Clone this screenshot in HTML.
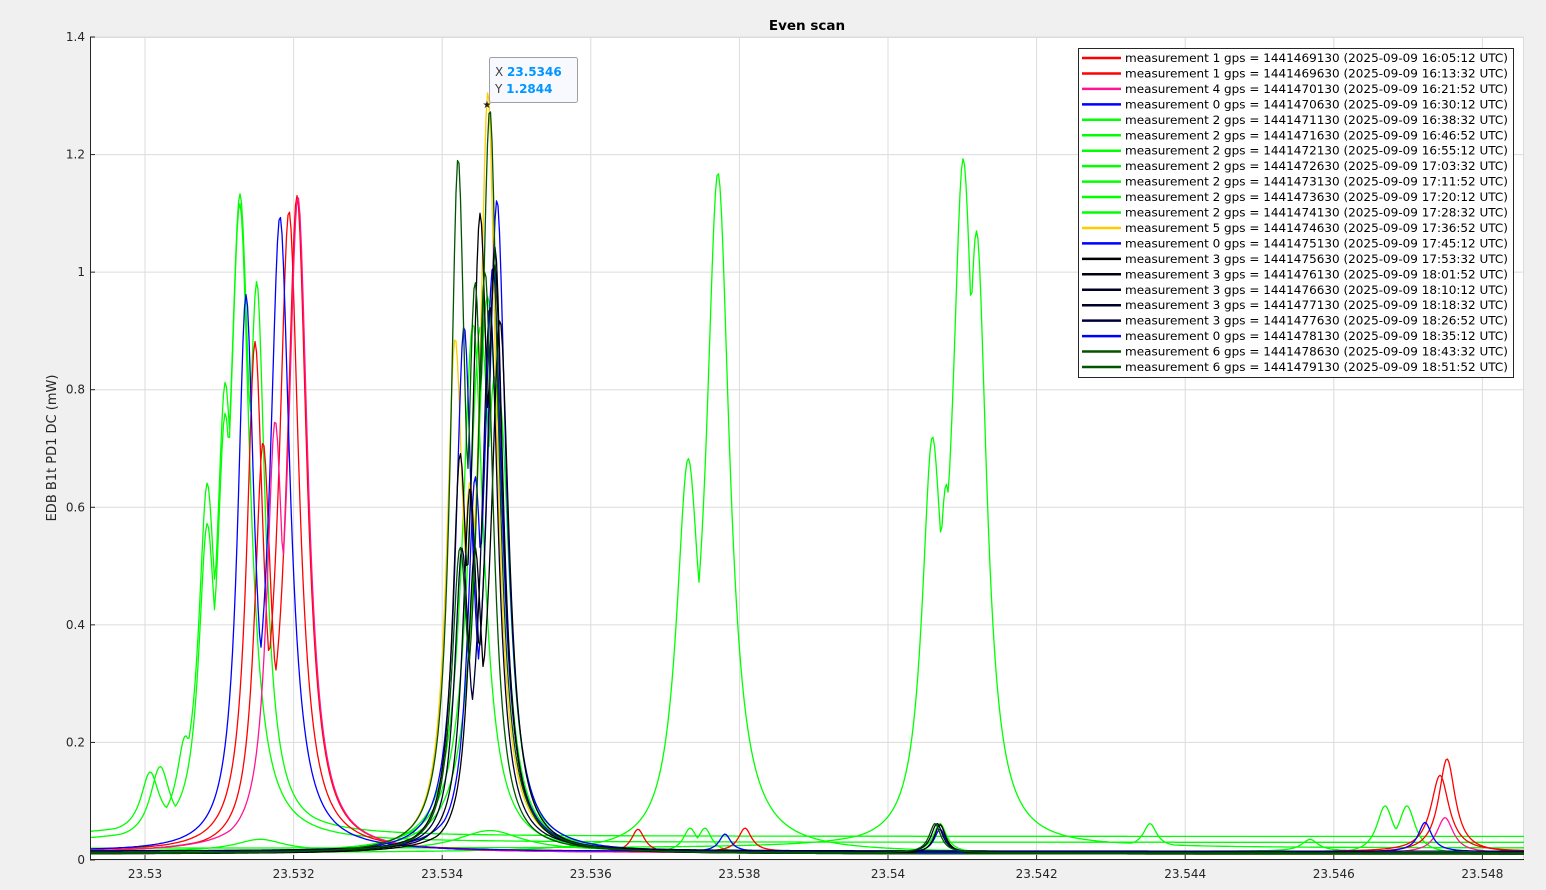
<!DOCTYPE html>
<html><head><meta charset="utf-8"><style>
html,body{margin:0;padding:0;background:#f0f0f0;width:1546px;height:890px;overflow:hidden;font-family:"Liberation Sans","DejaVu Sans",sans-serif}
svg{position:absolute;left:0;top:0}
</style></head><body>
<svg id="s" width="1546" height="890" xmlns="http://www.w3.org/2000/svg" font-family="DejaVu Sans, Liberation Sans, sans-serif">
<rect x="90" y="37" width="1434" height="823" fill="#fff"/>
<g id="grid" stroke="#dcdcdc" stroke-width="1"></g>
<g id="curves" fill="none" stroke-width="1.3" stroke-linejoin="round"></g>
<line x1="90.5" y1="37" x2="90.5" y2="860" stroke="#262626"/>
<line x1="90" y1="859.5" x2="1524" y2="859.5" stroke="#262626"/>
<g id="ticks" font-size="12" fill="#262626"></g>
<text x="807" y="30" font-size="13.5" font-weight="bold" text-anchor="middle" fill="#000">Even scan</text>
<text transform="translate(56,448) rotate(-90)" font-size="13" text-anchor="middle" fill="#262626">EDB B1t PD1 DC (mW)</text>
<g id="legend"></g>
<rect x="489.5" y="57.5" width="88" height="45" rx="2" fill="#f8f8ff" stroke="#a0a0a0"/>
<text x="495" y="76" font-size="12" fill="#404040">X <tspan fill="#0096ff" font-weight="bold">23.5346</tspan></text>
<text x="495" y="93" font-size="12" fill="#404040">Y <tspan fill="#0096ff" font-weight="bold">1.2844</tspan></text>
<text x="487" y="108" font-size="10" text-anchor="middle" fill="#222">★</text>
</svg>
<script>
const NS="http://www.w3.org/2000/svg";
const X0=90,X1=1524,Y0=37,Y1=860,PY=(Y1-Y0)/1.4;
function el(t,a,p,txt){const e=document.createElementNS(NS,t);for(const k in a)e.setAttribute(k,a[k]);if(txt!=null)e.textContent=txt;p.appendChild(e);return e;}
const grid=document.getElementById('grid'),ticks=document.getElementById('ticks');
const xl=["23.53","23.532","23.534","23.536","23.538","23.54","23.542","23.544","23.546","23.548"];
for(let i=0;i<10;i++){const x=145+i*148.6;el('line',{x1:x,y1:Y0,x2:x,y2:Y1},grid);el('line',{x1:x,y1:Y1,x2:x,y2:Y1-5,stroke:'#262626'},ticks);el('text',{x:x,y:878,'text-anchor':'middle'},ticks,xl[i]);}
for(let i=0;i<=7;i++){const v=i*0.2,y=Y1-v*PY;el('line',{x1:X0,y1:y,x2:X1,y2:y},grid);el('line',{x1:X0,y1:y,x2:X0+5,y2:y,stroke:'#262626'},ticks);el('text',{x:85,y:y+4,'text-anchor':'end'},ticks,i==0?'0':(v.toFixed(1).replace(/\.0$/,'')));}
el('line',{x1:X0,y1:Y0+.5,x2:X1,y2:Y0+.5},grid);el('line',{x1:X1-.5,y1:Y0,x2:X1-.5,y2:Y1},grid);
const C=document.getElementById('curves');
function curve(col,peaks,base){let d='';for(let x=X0;x<=X1;x+=1.5){let m=0,s=0;for(const p of peaks){const u=(x-p[0])/p[2];const t=p[1]/(1+u*u);s+=t;if(t>m)m=t;}const v=base+m+0.15*(s-m);const y=Y1-v*PY;d+=(d?'L':'M')+x.toFixed(1)+' '+y.toFixed(1);}el('path',{d:d,stroke:col},C);}
const G='#00ff00';
curve(G,[[240,1.02,12],[257,0.88,10],[225,0.68,10],[207,0.55,10],[185,0.14,10],[150,0.1,11]],0.04);
curve(G,[[240,1.05,12],[225,0.65,10],[207,0.5,10],[160,0.12,12]],0.03);
curve(G,[[718,1.14,14],[688,0.64,14]],0.012);
curve(G,[[963,1.08,13],[977,0.96,12],[932,0.64,12],[946,0.5,10],[1150,0.04,8]],0.02);
curve(G,[[487,0.9,14],[500,0.7,12],[1385,0.08,10],[1407,0.08,10]],0.01);
curve(G,[[480,0.85,14],[495,0.75,12],[690,0.04,8],[705,0.04,8]],0.012);
curve(G,[[260,0.02,30],[490,0.035,40],[1310,0.02,10]],0.015);
curve(G,[[473,0.9,13],[940,0.05,8]],0.012);
curve('#ff0000',[[297,1.11,12],[263,0.68,10],[1447,0.16,10],[638,0.04,8]],0.012);
curve('#ff0000',[[289,1.08,12],[255,0.85,10],[1440,0.13,11],[745,0.04,8]],0.014);
curve('#ff1493',[[298,1.1,12],[275,0.7,10],[1445,0.06,10]],0.012);
curve('#0000ff',[[280,1.07,12],[246,0.93,10],[1425,0.05,8],[725,0.03,7]],0.014);
curve('#ffcc00',[[488,1.27,10],[455,0.84,10],[470,0.55,9]],0.01);
curve('#0000ff',[[497,1.1,11],[464,0.88,10],[940,0.04,7]],0.012);
curve('#0000ff',[[493,0.98,11],[475,0.6,9]],0.012);
curve('#000000',[[480,1.03,10],[495,0.95,10],[460,0.64,9],[940,0.05,7]],0.01);
curve('#000020',[[495,1.02,10],[470,0.6,9],[937,0.05,7]],0.012);
curve('#000033',[[490,0.92,10],[462,0.5,9]],0.015);
curve('#000000',[[500,0.9,11],[475,0.5,9]],0.01);
curve('#005500',[[458,1.14,9],[490,1.22,10],[475,0.88,9]],0.01);
curve('#005500',[[485,0.98,10],[460,0.5,10],[935,0.05,7]],0.012);
const L=document.getElementById('legend');
el('rect',{x:1078.5,y:48.5,width:435,height:329,fill:'#fff',stroke:'#262626'},L);
const items=[['#ff0000',1,'1441469130','16:05:12'],['#ff0000',1,'1441469630','16:13:32'],['#ff1493',4,'1441470130','16:21:52'],['#0000ff',0,'1441470630','16:30:12'],[G,2,'1441471130','16:38:32'],[G,2,'1441471630','16:46:52'],[G,2,'1441472130','16:55:12'],[G,2,'1441472630','17:03:32'],[G,2,'1441473130','17:11:52'],[G,2,'1441473630','17:20:12'],[G,2,'1441474130','17:28:32'],['#ffcc00',5,'1441474630','17:36:52'],['#0000ff',0,'1441475130','17:45:12'],['#000000',3,'1441475630','17:53:32'],['#000010',3,'1441476130','18:01:52'],['#000020',3,'1441476630','18:10:12'],['#000028',3,'1441477130','18:18:32'],['#000033',3,'1441477630','18:26:52'],['#0000ff',0,'1441478130','18:35:12'],['#005500',6,'1441478630','18:43:32'],['#005500',6,'1441479130','18:51:52']];
items.forEach((it,i)=>{const y=58+i*15.45;el('line',{x1:1082,y1:y,x2:1121,y2:y,stroke:it[0],'stroke-width':2.5},L);el('text',{x:1125,y:y+4,'font-size':11.6,fill:'#000',textLength:383,lengthAdjust:'spacingAndGlyphs'},L,'measurement '+it[1]+' gps = '+it[2]+' (2025-09-09 '+it[3]+' UTC)');});
</script>
</body></html>
